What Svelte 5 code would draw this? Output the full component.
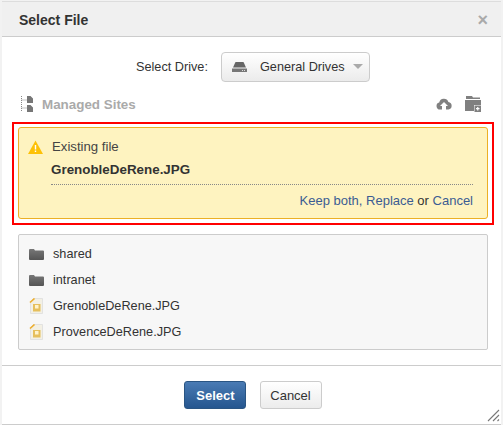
<script>
  const rows = [
    { name: 'shared', type: 'folder' },
    { name: 'intranet', type: 'folder' },
    { name: 'GrenobleDeRene.JPG', type: 'image' },
    { name: 'ProvenceDeRene.JPG', type: 'image' }
  ];
</script>

<div class="page">
  <div class="dialog">
    <header class="head">
      <h1>Select File</h1>
      <span class="close">×</span>
    </header>

    <div class="body">
      <div class="drive-row">
        <span class="drive-label">Select Drive:</span>
        <button class="drive-btn">
          <svg width="15" height="10" viewBox="0 0 15 10"><path d="M3.500 0h8L14 5.500H1z" fill="#666"/><path d="M0 6.500h15V10H0z" fill="#777"/><path d="M10 8.500h1M12 8.500h1" stroke="#ddd"/></svg>
          <span>General Drives</span>
          <i class="caret"></i>
        </button>
      </div>

      <div class="sites-row">
        <svg class="tree" width="13" height="16" viewBox="0 0 13 16">
          <path d="M1.500 0v15M1.500 4h5M1.500 12h5" stroke="#888" stroke-dasharray="1 1" fill="none"/>
          <path d="M7 0h3.500L13 2.500V7H7zM7 9h3.500L13 11.500V16H7z" fill="#777"/>
        </svg>
        <span class="sites">Managed Sites</span>
        <span class="tools">
          <svg width="16" height="12" viewBox="0 0 16 12"><path d="M4 11.500a3.500 3.500 0 0 1-.8-6.900A4.800 4.800 0 0 1 12.400 4 3.800 3.800 0 0 1 12.500 11.500H10V8h2L8 4 4 8h2v3.500z" fill="#808080"/></svg>
          <svg width="16" height="16" viewBox="0 0 16 16"><path d="M1 0h6l1 1.500h7V3H1z" fill="#808080"/><path d="M0 4h16v5H9v6H0z" fill="#808080"/><path d="M9.500 9.500h6.500v6.500H9.500z" fill="#808080"/><path d="M11 12.700h3.500M12.750 11v3.400" stroke="#fff" stroke-width="1.200"/></svg>
        </span>
      </div>

      <div class="red-frame">
        <div class="alert">
          <div class="existing">
            <svg width="15" height="14" viewBox="0 0 15 14"><path d="M7.500 0.500L15 14H0z" fill="#fdc107"/><path d="M6.800 5h1.400v4.500H6.800zM6.800 10.500h1.400V12H6.800z" fill="#fff"/></svg>
            <span>Existing file</span>
          </div>
          <div class="filename">GrenobleDeRene.JPG</div>
          <div class="actions"><span class="link">Keep both, Replace</span> or <span class="link">Cancel</span></div>
        </div>
      </div>

      <div class="list">
        {#each rows as row}
          <div class="row">
            {#if row.type === 'folder'}
              <svg width="15" height="11" viewBox="0 0 15 11"><defs><linearGradient id="fold" x1="0" y1="0" x2="0" y2="1"><stop offset="0" stop-color="#777"/><stop offset="1" stop-color="#555"/></linearGradient></defs><path d="M0 1Q0 0 1 0h4l1 1.500h8q1 0 1 1V10q0 1-1 1H1q-1 0-1-1z" fill="url(#fold)"/></svg>
            {:else}
              <svg width="14" height="16" viewBox="0 0 14 16"><path d="M1 4L4 .5h9v15H1z" fill="#f3f0e4" stroke="#ddd" stroke-width=".8"/><path d="M0.500 4.500L5 0.500" stroke="#eeae2c" stroke-width="1.600"/><rect x="3.500" y="6" width="7.500" height="7.500" fill="#e6bf5c"/><rect x="5.500" y="7" width="3.500" height="3.500" fill="#fff3cc"/></svg>
            {/if}
            <span>{row.name}</span>
          </div>
        {/each}
      </div>
    </div>

    <footer class="foot">
      <button class="btn primary">Select</button>
      <button class="btn">Cancel</button>
      <svg class="grip" width="13" height="13" viewBox="0 0 13 13"><path d="M1 12L12 1M6 12l6-6M10.500 12l1.500-1.500" stroke="#777" stroke-width="1.100" fill="none"/></svg>
    </footer>
  </div>
</div>

<style>
  :global(body) {
    margin: 0;
    background: #f2f2f2;
  }
  .page {
    width: 503px;
    height: 425px;
    box-sizing: border-box;
    padding: 1px 2px 0 2px;
    font-family: "Liberation Sans", Arial, sans-serif;
    font-size: 12.7px;
    color: #333;
    overflow: hidden;
  }
  .dialog {
    height: 422px;
    background: #fff;
    border-top: 1px solid #ddd;
    border-bottom: 1px solid #ccc;
    display: flex;
    flex-direction: column;
  }
  .head {
    flex: none;
    height: 35px;
    box-sizing: border-box;
    background: #f0f0f0;
    border-bottom: 1px solid #ccc;
    padding: 1px 13px 0 17px;
    display: flex;
    align-items: center;
    justify-content: space-between;
  }
  h1 {
    margin: 0;
    font-size: 14px;
    font-weight: bold;
    color: #333;
  }
  .close {
    font-size: 18px;
    font-weight: bold;
    color: #aaa;
    line-height: 18px;
  }
  .body {
    flex: 1;
    padding: 0 13px 0 10px;
    display: flex;
    flex-direction: column;
  }
  .drive-row {
    margin-top: 15px;
    display: flex;
    align-items: center;
    height: 30px;
    padding-left: 124px;
  }
  .drive-label {
    width: 85px;
  }
  .drive-btn {
    width: 149px;
    height: 30px;
    padding: 0 0 0 10px;
    border: 1px solid #ccc;
    border-radius: 4px;
    background: linear-gradient(#fff, #ebebeb);
    display: flex;
    align-items: center;
    font: inherit;
    color: #333;
  }
  .drive-btn span {
    margin-left: 13px;
    white-space: nowrap;
  }
  .caret {
    margin-left: 8px;
    margin-top: -2px;
    border: 5px solid transparent;
    border-top: 5px solid #aaa;
    border-bottom: 0;
  }
  .sites-row {
    margin-top: 11px;
    height: 22px;
    display: flex;
    align-items: center;
    padding: 0 7px 0 8px;
  }
  .tree {
    margin-right: 9px;
  }
  .sites {
    font-size: 13.400px;
    font-weight: bold;
    color: #aaa;
  }
  .tools {
    margin-left: auto;
    display: flex;
    align-items: center;
    gap: 13px;
  }
  .red-frame {
    margin-top: 7px;
    margin-right: -6px;
    border: 2px solid #f00;
    padding: 3px 4px;
    height: 103px;
    box-sizing: border-box;
  }
  .alert {
    height: 92px;
    box-sizing: border-box;
    background: #fef3c0;
    border: 1px solid #ecb024;
    border-radius: 3px;
    padding: 11px 14px 0 9px;
  }
  .existing {
    display: flex;
    align-items: center;
    gap: 9px;
    height: 15px;
    font-size: 13.200px;
    color: #444;
  }
  .filename {
    margin: 8px 0 0 23px;
    font-weight: bold;
    font-size: 13.400px;
    color: #333;
    border-bottom: 1px dotted #888;
    padding-bottom: 7px;
  }
  .actions {
    margin-top: 8px;
    font-size: 13px;
    text-align: right;
  }
  .link {
    color: #3b5c93;
  }
  .list {
    margin-top: 9px;
    margin-left: 6px;
    width: 470px;
    height: 116px;
    box-sizing: border-box;
    border: 1px solid #ccc;
    border-radius: 2px;
    background: #f7f7f7;
    padding: 6px 0 0 10px;
  }
  .row {
    height: 26px;
    display: flex;
    align-items: center;
  }
  .row svg {
    width: 15px;
    margin-right: 9px;
  }
  .foot {
    position: relative;
    flex: none;
    height: 59px;
    box-sizing: border-box;
    border-top: 1px solid #ccc;
    display: flex;
    justify-content: center;
    gap: 14px;
    padding: 15px 0 0 2px;
  }
  .btn {
    width: 62px;
    height: 28px;
    padding: 0;
    font: inherit;
    font-size: 13px;
    border: 1px solid #ccc;
    border-radius: 3px;
    background: linear-gradient(#fff, #ececec);
    color: #333;
  }
  .primary {
    padding-left: 2px;
    background: linear-gradient(#4a7bb4, #25568f);
    border-color: #2a5583;
    color: #fff;
    font-weight: bold;
  }
  .grip {
    position: absolute;
    right: 1px;
    bottom: 2px;
  }
</style>
